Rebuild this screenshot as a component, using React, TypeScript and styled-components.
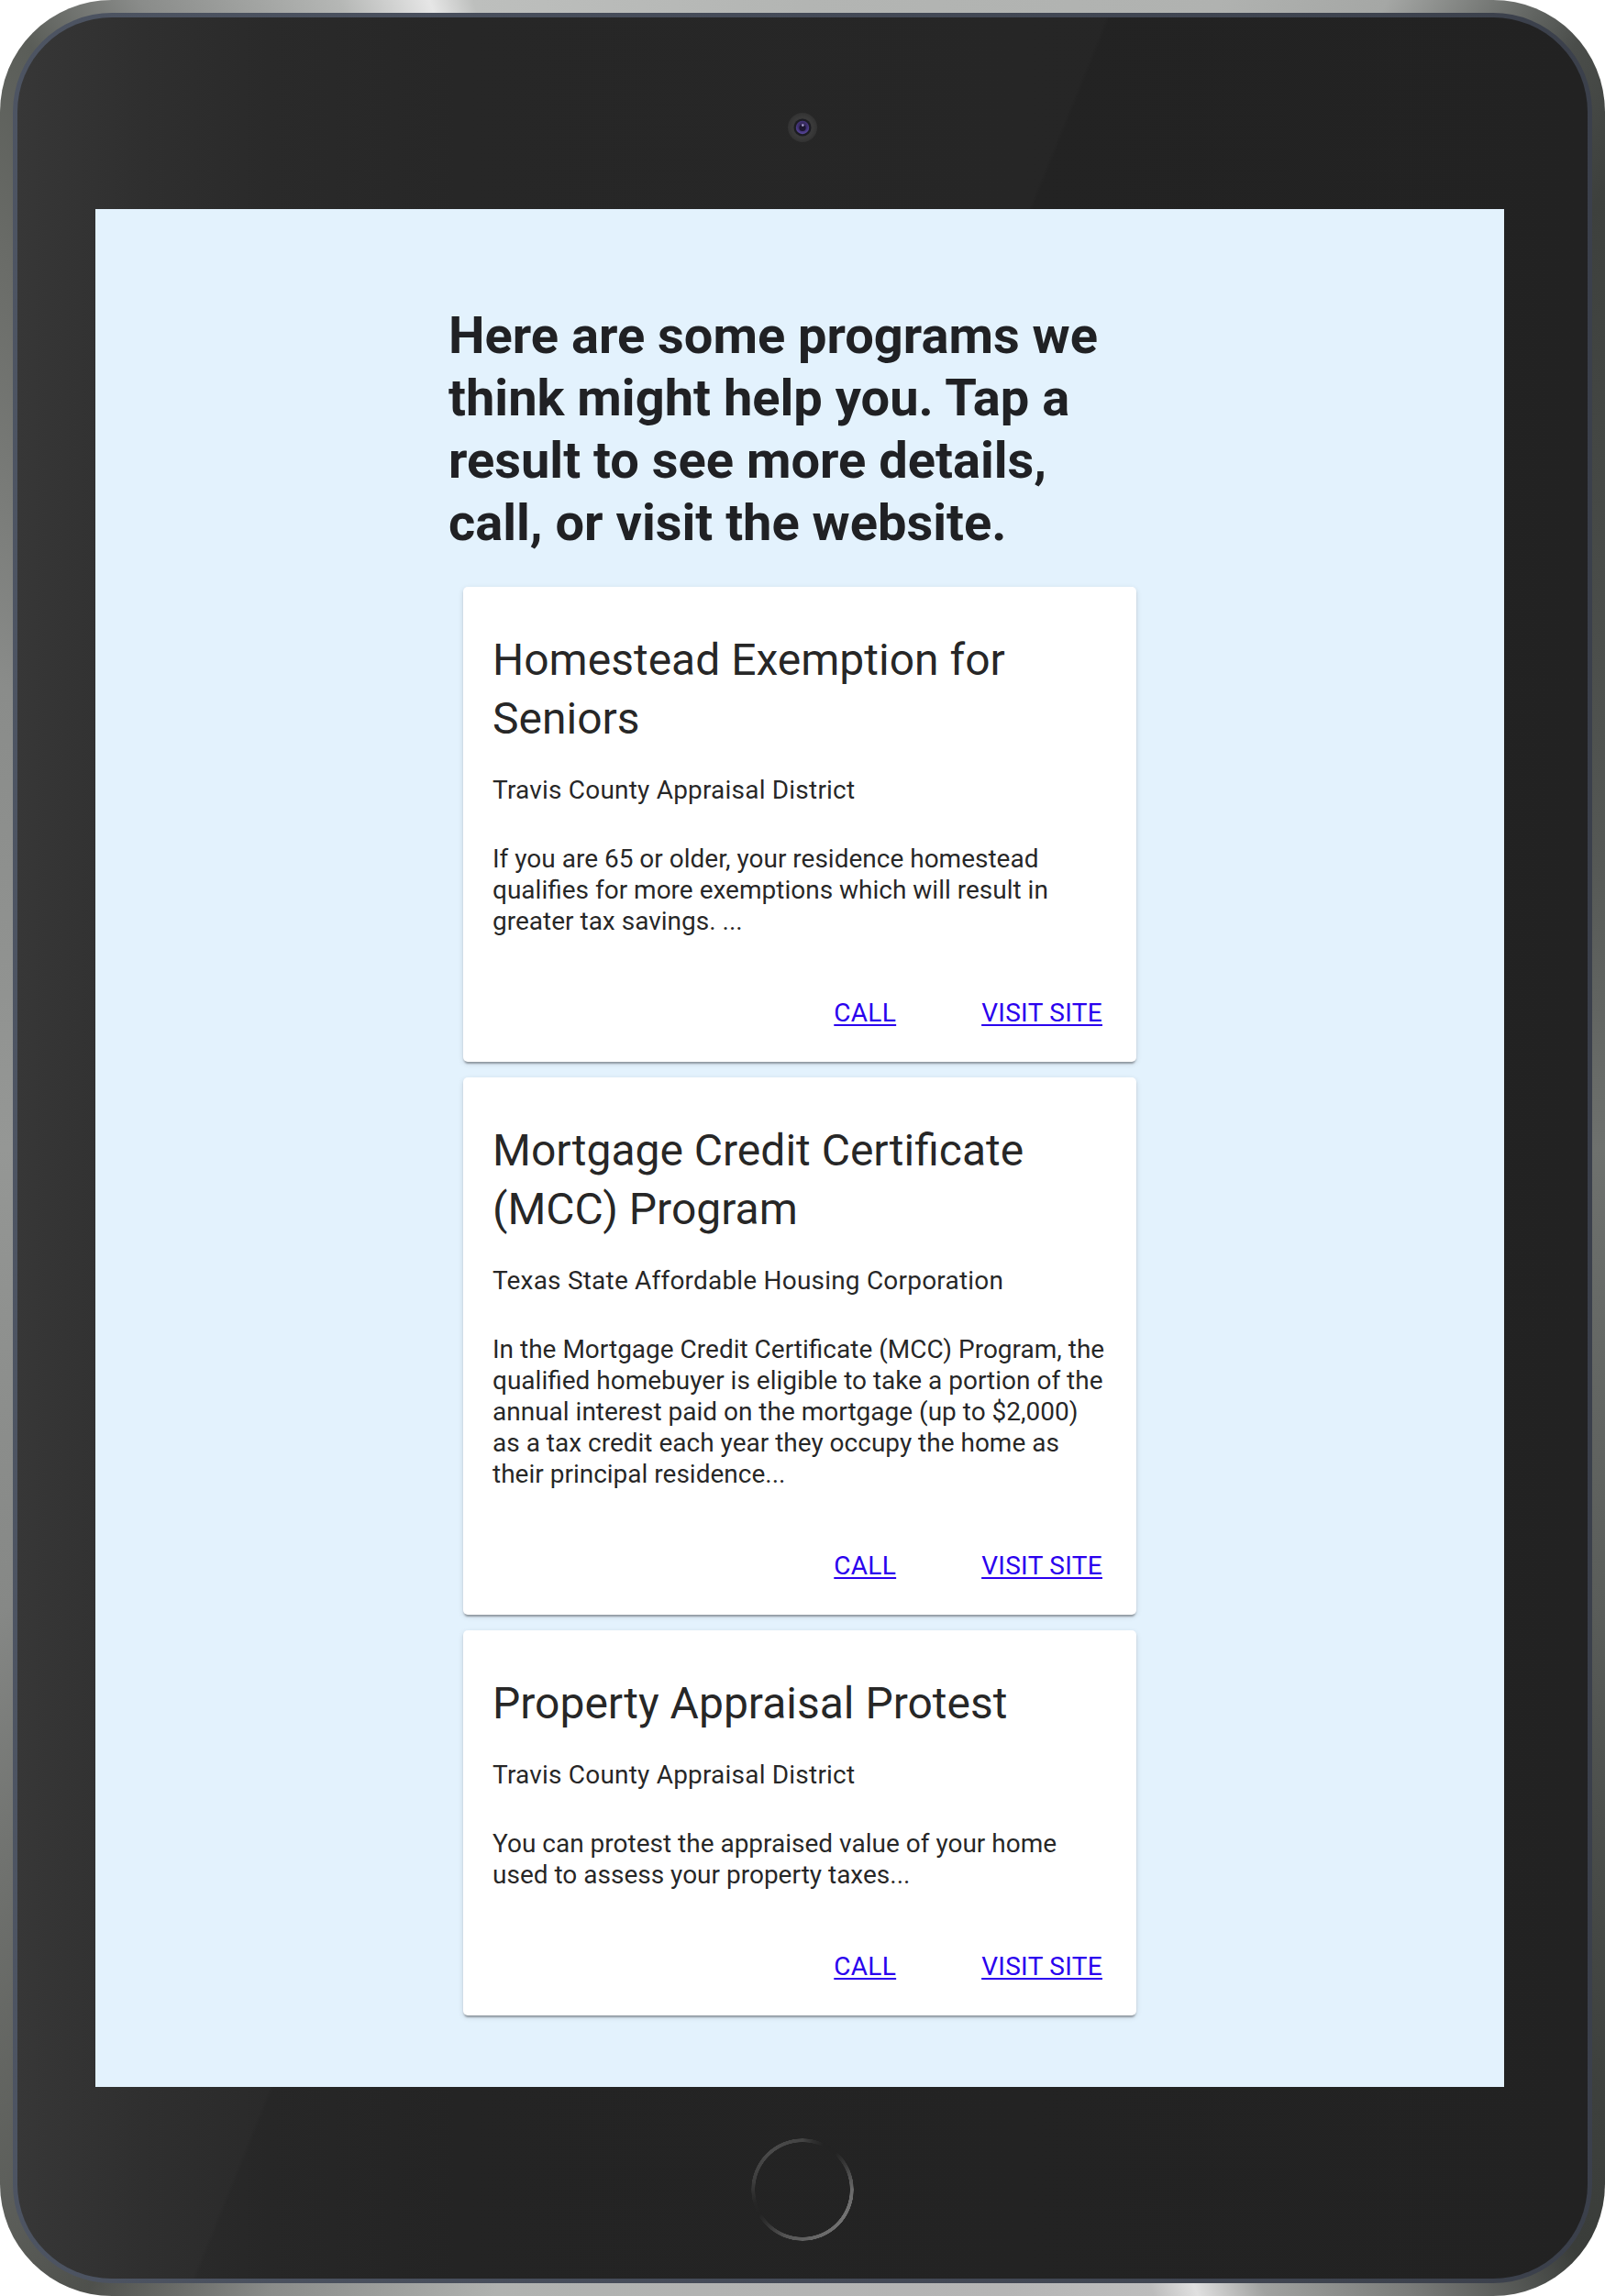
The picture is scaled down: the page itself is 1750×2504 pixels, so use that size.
import React from 'react';
import styled, { createGlobalStyle } from 'styled-components';

const GlobalStyle = createGlobalStyle`
  html, body {
    margin: 0;
    padding: 0;
    background: #ffffff;
  }
  body {
    font-family: Roboto, "Liberation Sans", Arial, sans-serif;
    -webkit-font-smoothing: antialiased;
  }
  * { box-sizing: border-box; }
`;

const Device = styled.div`
  width: 1750px;
  height: 2504px;
  border-radius: 122px;
  padding: 14px;
  background: conic-gradient(
    from 0deg at 50% 50%,
    #b3b5b3 0deg,
    #b0b2b0 20deg,
    #a5a7a5 27deg,
    #6a6d6a 32deg,
    #4a4d4a 35deg,
    #3d403d 40deg,
    #555855 70deg,
    #6e716e 90deg,
    #5a5d5a 120deg,
    #3d403d 140deg,
    #3a3d3a 145deg,
    #7a7c7a 152deg,
    #a0a2a0 158deg,
    #e0e0e0 161deg,
    #bdbdbd 163deg,
    #b5b5b5 170deg,
    #b0b2b0 195deg,
    #8a8c8a 205deg,
    #4e504c 212deg,
    #5a5c58 216deg,
    #868886 240deg,
    #959795 270deg,
    #8a8c8a 300deg,
    #6a6c68 318deg,
    #5a5d58 325deg,
    #8a8c8a 330deg,
    #b5b7b5 338deg,
    #e6e6e6 342deg,
    #bdbfbd 344deg,
    #b3b5b3 360deg
  );
`;

const BezelEdge = styled.div`
  height: 100%;
  border-radius: 108px;
  padding: 5px;
  background: linear-gradient(90deg, #4d5462 0%, #444a57 50%, #3b404b 100%);
`;

const Bezel = styled.div`
  height: 100%;
  border-radius: 103px;
  display: flex;
  flex-direction: column;
  align-items: center;
  padding-top: 104px;
  background:
    linear-gradient(112deg, rgba(255, 255, 255, 0.016) 0 43.8%, rgba(255, 255, 255, 0) 44%),
    linear-gradient(90deg, #343434 0%, #2c2c2c 8%, #272727 16%, #242424 28%, #222222 100%);
`;

const CameraWrap = styled.div`
  width: 32px;
  height: 32px;
  display: flex;
`;

const Screen = styled.main`
  width: 1536px;
  height: 2048px;
  margin: 73px 6px 0 0;
  background: #e3f2fd;
  overflow: hidden;
`;

const HomeButton = styled.div`
  width: 112px;
  height: 112px;
  margin-top: 56px;
  border-radius: 50%;
  background: conic-gradient(
    from 0deg,
    #444444 0deg,
    #303030 12deg,
    #232323 25deg,
    #232323 42deg,
    #3c3c3c 62deg,
    #6a6a6a 90deg,
    #727272 125deg,
    #686868 165deg,
    #555555 200deg,
    #333333 225deg,
    #232323 240deg,
    #262626 255deg,
    #3e3e3e 280deg,
    #4a4a4a 320deg,
    #444444 360deg
  );
  -webkit-mask: radial-gradient(circle, transparent 51.5px, #000 52px, #000 55.5px, transparent 56px);
  mask: radial-gradient(circle, transparent 51.5px, #000 52px, #000 55.5px, transparent 56px);
`;

const Page = styled.div`
  width: 766px;
  margin: 0 auto;
  padding-top: 104px;
`;

const Heading = styled.h1`
  margin: 0 0 36px;
  font-family: Roboto, "Liberation Sans", Arial, sans-serif;
  font-weight: 700;
  font-size: 56px;
  line-height: 68px;
  color: #202124;
`;

const CardList = styled.div`
  display: flex;
  flex-direction: column;
  gap: 17px;
  padding: 0 16px;
`;

const Card = styled.article`
  background: #ffffff;
  border-radius: 5px;
  padding: 48px 28px 36px 32px;
  box-shadow: 0 4px 2px -2px rgba(0, 0, 0, 0.2), 0 2px 2px 0 rgba(0, 0, 0, 0.14),
    0 2px 6px 0 rgba(0, 0, 0, 0.12);
`;

const Title = styled.h2`
  margin: 0 0 29px;
  font-family: Roboto, "Liberation Sans", Arial, sans-serif;
  font-weight: 400;
  font-size: 48px;
  line-height: 64px;
  color: rgba(0, 0, 0, 0.87);
`;

const Provider = styled.p`
  margin: 0 0 41px;
  font-size: 28px;
  line-height: 34px;
  letter-spacing: 0.2px;
  color: rgba(0, 0, 0, 0.87);
`;

const Description = styled.p`
  margin: 0 0 66px;
  font-size: 28px;
  line-height: 34px;
  letter-spacing: 0;
  color: rgba(0, 0, 0, 0.87);
`;

const Actions = styled.div`
  display: flex;
  justify-content: flex-end;
  gap: 93px;
  padding-right: 9px;
`;

const ActionLink = styled.a`
  font-size: 28px;
  line-height: 34px;
  letter-spacing: 0.3px;
  color: #2a00ee;
  text-decoration: underline;
  text-underline-offset: 3px;
  cursor: pointer;
`;

const Camera = () => (
  <CameraWrap>
    <svg width="32" height="32" viewBox="0 0 32 32">
      <defs>
        <radialGradient id="camOuter" cx="50%" cy="50%" r="50%">
          <stop offset="0%" stopColor="#2f2f2f" />
          <stop offset="70%" stopColor="#3a3a3a" />
          <stop offset="100%" stopColor="#323232" />
        </radialGradient>
        <radialGradient id="lens" cx="50%" cy="40%" r="60%">
          <stop offset="0%" stopColor="#2a2040" />
          <stop offset="60%" stopColor="#3f3070" />
          <stop offset="100%" stopColor="#5a48a0" />
        </radialGradient>
      </defs>
      <circle cx="16" cy="16" r="16" fill="url(#camOuter)" />
      <circle cx="16" cy="16" r="9.5" fill="#1c1c22" />
      <circle cx="16" cy="16" r="7.2" fill="url(#lens)" />
      <circle cx="16" cy="16.5" r="3.6" fill="#1c1630" />
      <circle cx="16.3" cy="13.6" r="1.3" fill="#a79fd0" />
    </svg>
  </CameraWrap>
);

type Program = {
  title: string;
  provider: string;
  description: string;
};

const programs: Program[] = [
  {
    title: 'Homestead Exemption for Seniors',
    provider: 'Travis County Appraisal District',
    description:
      'If you are 65 or older, your residence homestead qualifies for more exemptions which will result in greater tax savings. ...',
  },
  {
    title: 'Mortgage Credit Certificate (MCC) Program',
    provider: 'Texas State Affordable Housing Corporation',
    description:
      'In the Mortgage Credit Certificate (MCC) Program, the qualified homebuyer is eligible to take a portion of the annual interest paid on the mortgage (up to $2,000) as a tax credit each year they occupy the home as their principal residence...',
  },
  {
    title: 'Property Appraisal Protest',
    provider: 'Travis County Appraisal District',
    description:
      'You can protest the appraised value of your home used to assess your property taxes...',
  },
];

export default function App() {
  return (
    <>
      <GlobalStyle />
      <Device>
        <BezelEdge>
          <Bezel>
            <Camera />
            <Screen>
              <Page>
                <Heading>
                  Here are some programs we think might help you. Tap a result to see more details,
                  call, or visit the website.
                </Heading>
                <CardList>
                  {programs.map((p) => (
                    <Card key={p.title}>
                      <Title>{p.title}</Title>
                      <Provider>{p.provider}</Provider>
                      <Description>{p.description}</Description>
                      <Actions>
                        <ActionLink href="#">CALL</ActionLink>
                        <ActionLink href="#">VISIT SITE</ActionLink>
                      </Actions>
                    </Card>
                  ))}
                </CardList>
              </Page>
            </Screen>
            <HomeButton />
          </Bezel>
        </BezelEdge>
      </Device>
    </>
  );
}
